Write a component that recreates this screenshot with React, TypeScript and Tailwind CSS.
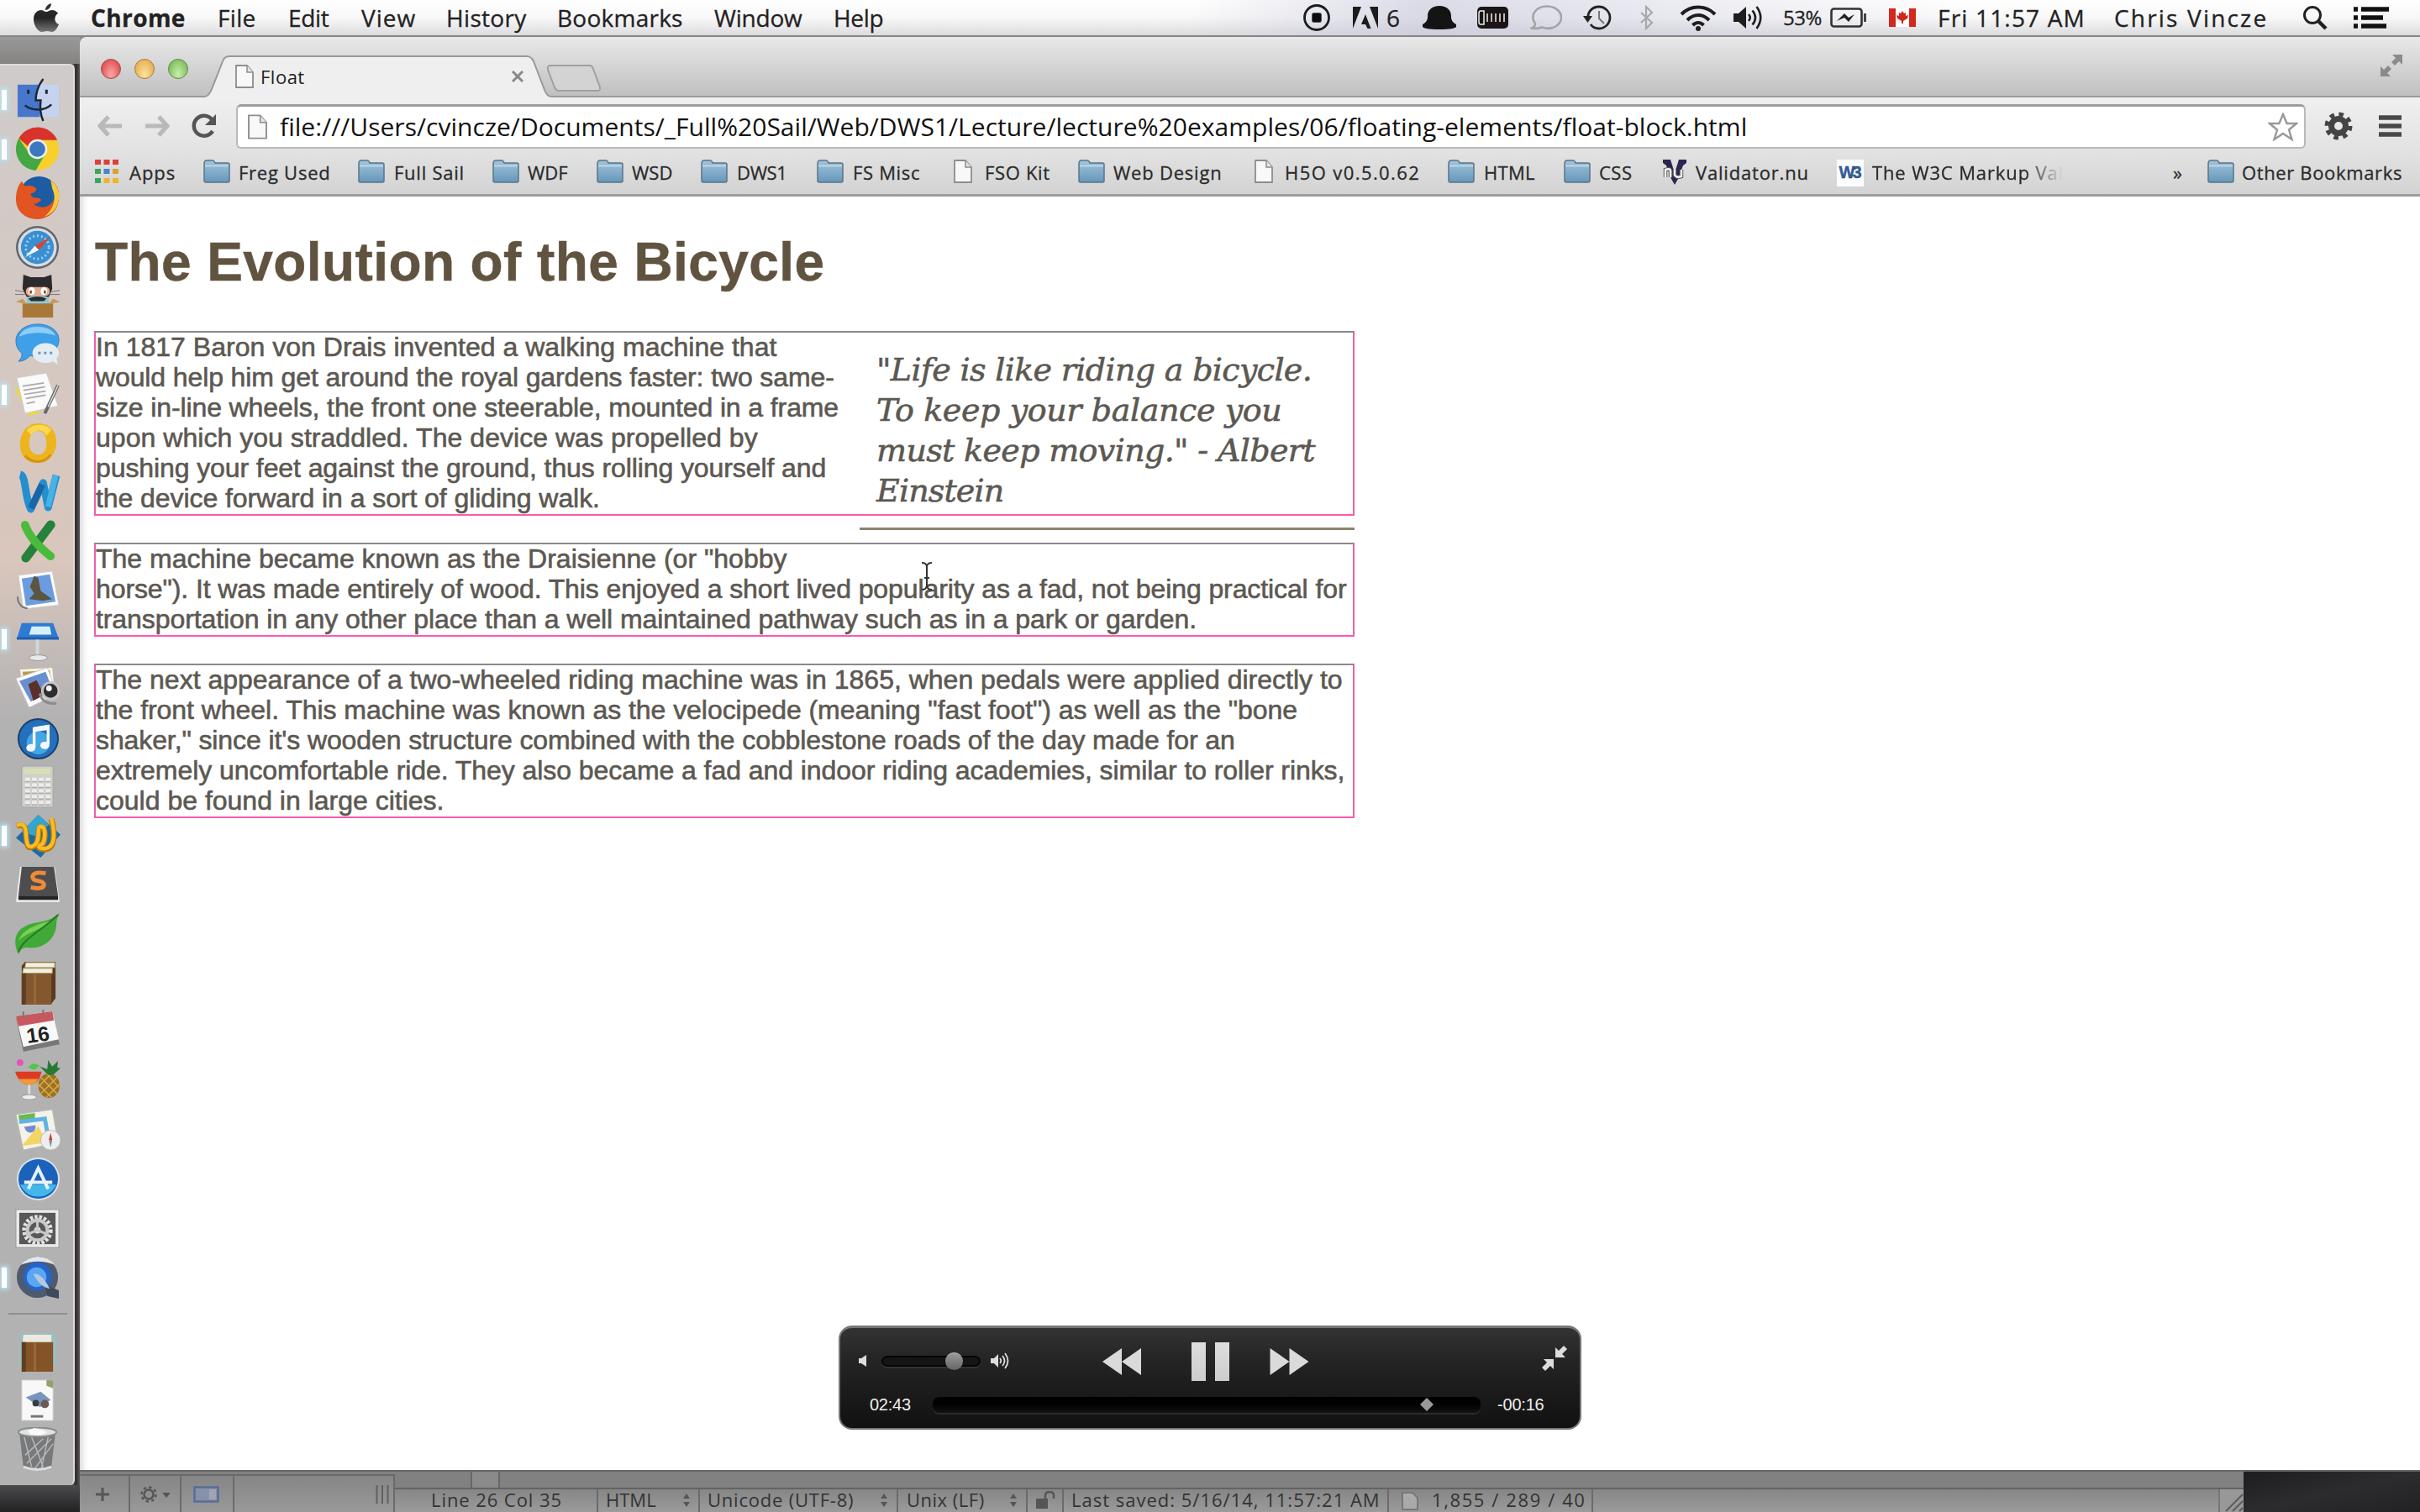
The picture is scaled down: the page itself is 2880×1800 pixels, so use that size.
import React, { useLayoutEffect, useRef, useState } from "react";

type FitProps = { children: string; className: string };

/** A single line of text tracked out or in so that it fills its box. */
function Fit({ children, className }: FitProps) {
  const box = useRef<HTMLSpanElement>(null);
  const text = useRef<HTMLSpanElement>(null);
  const [spacing, setSpacing] = useState(0);
  useLayoutEffect(() => {
    if (!box.current || !text.current) return;
    const room = box.current.clientWidth - text.current.offsetWidth;
    setSpacing(room / Math.max(1, children.length - 1));
  }, [children]);
  return (
    <span ref={box} className={"block shrink-0 whitespace-pre " + className}>
      <span ref={text} style={{ letterSpacing: `${spacing}px` }}>
        {children}
      </span>
    </span>
  );
}

/* ---------- menu bar ---------- */

function MenuBar() {
  return (
    <header className="flex h-[44px] shrink-0 items-center border-b-2 border-[#858585] bg-linear-to-b from-white via-[#f8f8f8] to-[#dcdcdf] text-[28px] leading-[42px] font-medium text-[#222] [-webkit-text-stroke:0.3px_#222]">
      <svg className="ml-[39px] h-[36px] w-[32px] shrink-0" viewBox="0 0 32 36">
        <defs>
          <linearGradient id="apple" x1="0" y1="0" x2="0" y2="1">
            <stop offset="0" stopColor="#333" />
            <stop offset=".5" stopColor="#222" />
            <stop offset="1" stopColor="#777" />
          </linearGradient>
        </defs>
        <path
          fill="url(#apple)"
          d="M22 1c0 4-3 8-7 8 0-4 3-7 7-8zM16 11c2 0 4-2 7-2 3 0 6 2 7 4-5 3-5 11 1 13-2 5-5 9-8 9-2 0-4-1-6-1s-4 1-6 1C6 35 1 27 1 20 1 13 5 9 10 9c2 0 4 2 6 2z"
        />
      </svg>
      <Fit className="ml-[37px] w-[112px] font-bold">Chrome</Fit>
      <Fit className="ml-[39px] w-[45px]">File</Fit>
      <Fit className="ml-[39px] w-[49px]">Edit</Fit>
      <Fit className="ml-[38px] w-[64px]">View</Fit>
      <Fit className="ml-[37px] w-[95px]">History</Fit>
      <Fit className="ml-[37px] w-[149px]">Bookmarks</Fit>
      <Fit className="ml-[38px] w-[105px]">Window</Fit>
      <Fit className="ml-[37px] w-[60px]">Help</Fit>
      <div className="flex h-full min-w-0 flex-1 items-center bg-linear-to-r from-transparent from-20% via-[#c4c4da]/60 via-35% to-transparent to-70%">
        <svg className="ml-[498px] h-[32px] w-[34px] shrink-0" viewBox="0 0 34 32">
          <ellipse cx="17" cy="16" rx="14.500" ry="14.500" fill="none" stroke="#1c1c1c" strokeWidth="2.800" />
          <rect x="11.500" y="10.500" width="11" height="11" rx="2" fill="#0c0c0c" stroke="#555" strokeWidth="1" />
        </svg>
        <svg className="ml-[26px] h-[26px] w-[30px] shrink-0" viewBox="0 0 30 26">
          <path fill="#1c1c1c" d="M0 0h10L0 26zM20 0h10v26zM15 9l6.500 17h-4l-2.500-5h-5z" />
        </svg>
        <Fit className="ml-[10px] w-[15px]">6</Fit>
        <svg className="ml-[28px] h-[28px] w-[40px] shrink-0" viewBox="0 0 40 28">
          <path fill="#141414" d="M20 0c9 0 14 5 14 12 0 5 1 7 6 10v3c-2 2-7 3-20 3S2 27 0 25v-3c5-3 6-5 6-10C6 5 11 0 20 0z" />
        </svg>
        <svg className="ml-[25px] h-[26px] w-[37px] shrink-0" viewBox="0 0 37 26">
          <rect width="37" height="26" rx="5" fill="#1b1516" />
          <path stroke="#ccc" strokeWidth="1.800" d="M12 8v10M17 8v10M22 8v10M27 8v10M32 8v10" />
          <path fill="none" stroke="#eee" strokeWidth="1.500" d="M8 5H4q-2 0-2 3v10q0 3 2 3h4z" />
        </svg>
        <svg className="ml-[26px] h-[30px] w-[38px] shrink-0" viewBox="0 0 38 30">
          <path fill="none" stroke="#a5a3a8" strokeWidth="2.600" d="M6 22C-1 12 7 1.500 20 1.500c12 0 20 9 16 18-4 8-14 10-22 7-4 1.500-8 2-12 1 3-1 4-3 4-5.500z" />
        </svg>
        <svg className="ml-[25px] h-[30px] w-[34px] shrink-0" viewBox="0 0 34 30">
          <path fill="none" stroke="#222" strokeWidth="2.800" d="M6 16C5 8 11 2 19 2c7 0 13 6 13 13s-6 13-13 13c-4 0-8-2-10-5" />
          <path fill="#222" d="M0 13h11l-5.500 8z" />
          <path fill="none" stroke="#777" strokeWidth="2" d="M19 7v9l6 6" />
        </svg>
        <svg className="ml-[33px] h-[30px] w-[18px] shrink-0" viewBox="0 0 18 30">
          <path fill="none" stroke="#a9a7a8" strokeWidth="2.200" d="M2 9l13 12-7 7V2l7 7L2 21" />
        </svg>
        <svg className="ml-[30px] h-[31px] w-[44px] shrink-0" viewBox="0 0 44 31">
          <g fill="none" stroke="#1e1e1e" strokeWidth="4">
            <path d="M2 11C13-.5 31-.5 42 11" />
            <path d="M9 18c8-8 18-8 26 0" />
            <path d="M15.500 24c4-4 9-4 13 0" />
          </g>
          <circle cx="22" cy="28" r="3" fill="#1e1e1e" />
        </svg>
        <svg className="ml-[19px] h-[30px] w-[36px] shrink-0" viewBox="0 0 36 30">
          <path fill="#1e1e1e" d="M1 10h6l9-8v26l-9-8H1z" />
          <path fill="none" stroke="#1e1e1e" strokeWidth="2.600" d="M19 11q3.500 4 0 8M23.500 6.500q7 8.500 0 17M28.500 2q9.500 13 0 26" />
        </svg>
        <Fit className="ml-[24px] w-[46px] text-[24px]">53%</Fit>
        <svg className="ml-[10px] h-[24px] w-[44px] shrink-0" viewBox="0 0 44 24">
          <rect x="1.500" y="1.500" width="36" height="21" rx="3" fill="none" stroke="#333" strokeWidth="2.600" />
          <path d="M41.500 7v10" stroke="#444" strokeWidth="3" />
          <path d="M8 16l9-9 5 5 7-4-7 9-5-5z" fill="#222" />
        </svg>
        <svg className="ml-[26px] h-[22px] w-[32px] shrink-0" viewBox="0 0 32 22">
          <rect width="32" height="22" fill="#fff" />
          <path fill="#d2281e" d="M0 0h8v22H0zM24 0h8v22h-8zM16 3l2 3 2-1v4l3-1-1 4-5 3v3h-2v-3l-5-3-1-4 3 1V5l2 1z" />
        </svg>
        <Fit className="ml-[26px] w-[175px]">Fri 11:57 AM</Fit>
        <Fit className="ml-[35px] w-[181px]">Chris Vincze</Fit>
        <svg className="ml-[43px] h-[30px] w-[30px] shrink-0" viewBox="0 0 30 30">
          <circle cx="12" cy="12" r="9.500" fill="none" stroke="#222" strokeWidth="3" />
          <path d="M19 19l9 9" stroke="#222" strokeWidth="4.500" />
        </svg>
        <svg className="ml-[31px] h-[26px] w-[42px] shrink-0" viewBox="0 0 42 26">
          <path stroke="#111" strokeWidth="5.500" d="M0 3h5M0 13h5M0 23h5M9 3h33M9 13h26M9 23h30" />
        </svg>
      </div>
    </header>
  );
}

/* ---------- dock ---------- */

const dockIcons: { running?: boolean; art: React.ReactNode }[] = [
  {
    running: true,
    art: (
      <>
        <rect x="3" y="8" width="50" height="39" fill="#c6d3ee" />
        <path d="M3 8h26l-4 20h6l-1 19H3z" fill="#4677cc" />
        <path d="M34 1c-6 8-9 17-9 26h6c-1 8 0 18 3 25" fill="none" stroke="#1e2737" strokeWidth="2.500" />
        <path d="M12 33c8 7 24 7 32-1" fill="none" stroke="#1e2737" strokeWidth="2.500" />
        <path d="M16 14v5M38 14v5" stroke="#1e2737" strokeWidth="3" />
      </>
    ),
  },
  {
    running: true,
    art: (
      <>
        <circle cx="27" cy="27" r="26" fill="#f9cf2c" />
        <path d="M4.500 14A26 26 0 0 1 51 16H27a12 12 0 0 0-11 8z" fill="#d8322b" />
        <path d="M4.500 14A26 26 0 0 0 25 53l11-19a12 12 0 0 1-19-2z" fill="#43a745" />
        <circle cx="27" cy="27" r="12" fill="#eee" />
        <circle cx="27" cy="27" r="9.500" fill="#3c78c0" />
      </>
    ),
  },
  {
    art: (
      <>
        <circle cx="29" cy="25" r="24" fill="#1d5ba2" />
        <path d="M43 5c8 6 11 13 10 23-1 15-12 24-25 25C12 53 1 43 1 29 1 20 3 13 8 7l4 6c5-2 10-1 14 3-1 4-4 5-7 6 0 4 3 5 7 5 3 0 5 1 6 3-3 1-5 5-10 4 8 8 23 5 26-8 2-9-1-15-5-21z" fill="#e25421" />
        <path d="M43 5c11 9 13 21 7 33-4 7-9 10-15 12 11-8 16-22 10-34z" fill="#f5ca3e" />
      </>
    ),
  },
  {
    art: (
      <>
        <circle cx="27" cy="27" r="26" fill="#62666d" />
        <circle cx="27" cy="27" r="23.500" fill="#d8dde2" />
        <circle cx="27" cy="27" r="20" fill="#398fd2" />
        <circle cx="27" cy="27" r="14" fill="none" stroke="#9fd2f0" strokeDasharray="2 3" strokeWidth="3" />
        <path d="M12 39l12-14 5 5z" fill="#f3f5f7" />
        <path d="M43 14L24 25l5 5z" fill="#d6452f" />
      </>
    ),
  },
  {
    art: (
      <>
        <path d="M0 20l12 2M54 20l-12 2M0 25h12M54 25H42" stroke="#777" />
        <path d="M10 1l9 3h16l9-3 1 17-4 10H14L9 18z" fill="#2d2a2e" />
        <rect x="13" y="16" width="29" height="11" rx="5" fill="#e3aa8c" />
        <ellipse cx="20" cy="21" rx="4" ry="5" fill="#fff" />
        <ellipse cx="35" cy="21" rx="4" ry="5" fill="#fff" />
        <path d="M19 20v4M36 20v4" stroke="#7a4a38" strokeWidth="2.500" />
        <path d="M14 29q13-6 27 0v8H14z" fill="#8fc8d3" />
        <path d="M16 30q11-5 22 0l-3 3H19z" fill="#2d2a2e" />
        <path d="M9 36h37v17H9z" fill="#a87839" />
        <path d="M9 36l-8-2 8-4 5 6zM46 36l8-2-8-4-5 6z" fill="#c69a59" />
      </>
    ),
  },
  {
    art: (
      <>
        <path d="M27 1c15 0 26 8 26 19S43 40 28 40c-4 0-7 0-10-1-4 5-9 7-14 7 3-3 5-6 4-10C3 32 1 27 1 21 1 10 12 1 27 1z" fill="#3f9fe8" stroke="#2d7dc4" />
        <path d="M27 4c12 0 20 5 22 11-11-5-32-5-44 1C7 9 15 4 27 4z" fill="#8fcdf7" />
        <ellipse cx="37" cy="36" rx="16" ry="12" fill="#e3edf4" />
        <path d="M43 44l9 6-3-11z" fill="#e3edf4" />
        <path d="M28 36h3M35 36h3M42 36h3" stroke="#7796b0" strokeWidth="3" />
      </>
    ),
  },
  {
    running: true,
    art: (
      <>
        <path d="M0 20l10-4 20 34-14 3z" fill="#ead845" />
        <path d="M2 7l36-6 14 40-40 9z" fill="#fafafa" stroke="#ccc" />
        <path d="M9 17l26-4M10 22l26-4M11 27l26-4M13 32l24-4M14 38l10-2" stroke="#aaa" strokeWidth="1.800" />
        <path d="M52 16L36 50" stroke="#66696d" strokeWidth="4" />
        <path d="M52 16L40 42" stroke="#ddd" strokeWidth="1.500" />
      </>
    ),
  },
  {
    art: (
      <>
        <path fillRule="evenodd" d="M28 3c14 0 22 9 22 23S41 51 27 51 6 42 6 28 15 3 28 3zm-1 9c-7 0-10 7-10 15s4 14 11 14 10-6 10-14-3-15-11-15z" fill="#eeb41e" />
        <path d="M14 12c6-9 23-10 30-1l-6 7c-5-9-14-8-18-1z" fill="#fbd84c" />
        <path d="M12 42c8 10 24 10 31-1" fill="none" stroke="#d69312" strokeWidth="3" />
      </>
    ),
  },
  {
    art: (
      <>
        <path d="M6 5c8 2 5 27 13 42L34 15l6 30L50 6" fill="none" stroke="#238fcf" strokeWidth="9" strokeLinejoin="round" />
        <path d="M19 46L33 17" stroke="#1a65a8" strokeWidth="8" />
        <path d="M40 44L49 6" stroke="#46b2e5" strokeWidth="7" />
      </>
    ),
  },
  {
    art: (
      <>
        <path d="M43 7L13 47" stroke="#24823a" strokeWidth="11" strokeLinecap="round" />
        <path d="M12 7q6 18 31 38" fill="none" stroke="#4abb3c" strokeWidth="10" strokeLinecap="round" />
      </>
    ),
  },
  {
    art: (
      <>
        <path d="M4 8l41-5 8 41-43 5z" fill="#fdfdfd" stroke="#ccc" />
        <path d="M8 12l34-5 7 33-36 5z" fill="#6c9ce0" />
        <path d="M23 9l5 2 3 16 14 10-12 2-16-2 6-7-5-8z" fill="#5c5640" />
        <path d="M3 34c0 10 7 14 12 14" fill="none" stroke="#777" strokeWidth="2" />
      </>
    ),
  },
  {
    running: true,
    art: (
      <>
        <path d="M8 7h38l7 19H2z" fill="#2e7bd4" />
        <path d="M2 24h51v3H2z" fill="#1f5eb0" />
        <path d="M20 11h22l2 10H17z" fill="#d7f0f8" />
        <path d="M27 27v21" stroke="#cfd7de" strokeWidth="4" />
        <ellipse cx="28" cy="49" rx="11" ry="3.500" fill="#e5e9ee" stroke="#999" />
      </>
    ),
  },
  {
    art: (
      <>
        <path d="M6 4l39-2 3 30-38 4z" fill="#f8f4e3" />
        <path d="M9 7l33-2 2 20-31 5z" fill="#b69a56" />
        <path d="M1 15l38-13 12 32-34 16z" fill="#fff" stroke="#ccc" />
        <path d="M5 18l32-11 9 23-27 13z" fill="#6a8fd0" />
        <path d="M16 22l10-5 9 18-13 7z" fill="#5b302b" />
        <circle cx="43" cy="30" r="10" fill="#2e2e30" stroke="#c5c5c7" strokeWidth="3" />
        <circle cx="41" cy="27" r="3.500" fill="#f4f4f4" />
        <path d="M30 33q3 14 20 12" fill="none" stroke="#8d8d8d" strokeWidth="3" />
      </>
    ),
  },
  {
    art: (
      <>
        <circle cx="28" cy="28" r="25" fill="#1d3f68" />
        <circle cx="28" cy="28" r="23" fill="#2370bd" />
        <circle cx="28" cy="33" r="14" fill="#45a6e4" />
        <path d="M23 38V16l17-3v22" fill="none" stroke="#f5f7fa" strokeWidth="3.500" />
        <path d="M22 17l19-3" stroke="#f5f7fa" strokeWidth="6" />
        <ellipse cx="19" cy="39" rx="5.500" ry="4.500" fill="#f5f7fa" />
        <ellipse cx="36" cy="36" rx="5.500" ry="4.500" fill="#f5f7fa" />
      </>
    ),
  },
  {
    art: (
      <>
        <rect x="8" y="2" width="38" height="50" rx="2" fill="#cfcfcb" stroke="#a3a3a0" />
        <rect x="11" y="5" width="32" height="7" fill="#d8dfb4" />
        <path d="M12 18h31M12 25h31M12 32h31M12 39h31M12 46h31" stroke="#ececec" strokeWidth="4" strokeDasharray="6 2.300" />
        <path d="M12 21h31M12 28h31M12 35h31M12 42h31M12 49h31" stroke="#a5a5a2" strokeWidth="1" strokeDasharray="6 2.300" />
      </>
    ),
  },
  {
    running: true,
    art: (
      <>
        <path d="M28 1l27 24-24 28L1 29z" fill="#1b6aa3" />
        <path d="M28 1l13 12-15 14L7 22z" fill="#33a6cf" />
        <path d="M2 15q10-5 11 8c1 18 3 20 10 16 9-6 2-22 8-23 8 0 5 20 1 22-5 2-4 5 4 5 12-1 13-16 8-37" fill="none" stroke="#b87a0b" strokeWidth="7" />
        <path d="M2 14q10-5 11 8c1 18 3 20 10 16 9-6 2-22 8-23 8 0 5 20 1 22-5 2-4 5 4 5 12-1 13-16 8-37" fill="none" stroke="#fbbb26" strokeWidth="4.500" />
      </>
    ),
  },
  {
    art: (
      <>
        <path d="M6 5h42l6 43H1z" fill="#e9e9e9" />
        <path d="M8 5h39l5 35H4z" fill="#4d4d4f" />
        <path d="M4 40h48v5H4z" fill="#242424" />
        <path d="M37 13q-15-3-16 4 0 4 7 5 7 1 7 5-1 6-16 3" fill="none" stroke="#ef8a3a" strokeWidth="5" />
      </>
    ),
  },
  {
    art: (
      <>
        <path d="M54 1C52 7 50 10 50 16c-1 18-16 30-34 28-5-1-10 2-12 8C-2 40-2 25 12 18 25 11 42 15 54 1z" fill="#41a938" />
        <path d="M52 4c-5 8-14 8-24 12C14 21 6 28 4 36 14 24 34 24 52 4z" fill="#78d052" />
        <path d="M4 50C8 34 29 26 52 4" fill="none" stroke="#257a23" strokeWidth="2" />
      </>
    ),
  },
  {
    art: (
      <>
        <path d="M12 1h37v44l-5 7H8V6z" fill="#5b3a1f" />
        <path d="M13 2h35v6H12zM10 9h35v6H9z" fill="#f1eee2" stroke="#b8aa68" />
        <path d="M8 15h36v38H8z" fill="#84582e" />
        <path d="M8 15h5v38H8z" fill="#5f3d20" />
        <path d="M24 16v36" stroke="#99693a" strokeWidth="3" />
      </>
    ),
  },
  {
    art: (
      <>
        <path d="M1 10l44-6 9 38-44 9z" fill="#777" />
        <path d="M1 8l44-6 8 34-43 9z" fill="#f8f8f8" />
        <path d="M1 8l44-6 2 11L4 20z" fill="#c85860" />
        <path d="M10 2v8M34 0v7" stroke="#777" strokeWidth="2" />
        <text x="14" y="39" transform="rotate(-8 28 32)" fontFamily="Liberation Sans" fontWeight="bold" fontSize="25" fill="#222">
          16
        </text>
      </>
    ),
  },
  {
    art: (
      <>
        <path d="M0 15h32q-3 16-15 16T0 15z" fill="#dc3b23" />
        <path d="M4 24h24q-4 8-11 7-8 0-13-7z" fill="#f09a36" />
        <path d="M17 31v13" stroke="#ddd" strokeWidth="3" />
        <ellipse cx="17" cy="46" rx="9" ry="3" fill="#eee" stroke="#999" />
        <circle cx="6" cy="4" r="4" fill="#e356b4" />
        <path d="M16 10q6-8 14-2l-7 5z" fill="#53c744" />
        <ellipse cx="41" cy="32" rx="13" ry="15" fill="#9b7225" />
        <path d="M31 22l20 20M28 30l16 16M38 17l15 17M51 22L31 42M54 30L38 46M44 17L28 34" stroke="#d9ac48" strokeWidth="1.500" />
        <path d="M40 19L30 9l9 3 1-11 5 8 7-7-1 8 4 1-9 8z" fill="#277a33" />
      </>
    ),
  },
  {
    art: (
      <>
        <path d="M1 8l44-6 7 40-42 9z" fill="#f5f3e8" stroke="#bbb" />
        <path d="M4 9l20-3v7L5 15z" fill="#6cb856" />
        <path d="M5 17l31-4 4 22" fill="none" stroke="#5fb3e3" strokeWidth="5" />
        <path d="M8 46l20-24 10 20z" fill="#f2d663" />
        <path d="M11 23l14-2q0 8-6 9-6 0-8-7z" fill="#7389d4" />
        <circle cx="43" cy="39" r="12" fill="#eee" stroke="#bbb" />
        <path d="M41 39l2-9 2 9z" fill="#ca3327" />
        <path d="M41 39l2 9 2-9z" fill="#888" />
      </>
    ),
  },
  {
    art: (
      <>
        <circle cx="28" cy="27" r="26" fill="#dce2e8" />
        <circle cx="28" cy="27" r="24" fill="#1b62ba" />
        <path d="M6 34a24 24 0 0 0 44 0z" fill="#44b7ea" />
        <path d="M16 39l12-25 12 25M11 31h34" fill="none" stroke="#e7f2fb" strokeWidth="4" />
      </>
    ),
  },
  {
    art: (
      <>
        <rect x="1" y="4" width="52" height="46" fill="#ececec" stroke="#999" />
        <rect x="5" y="8" width="44" height="38" fill="#58585a" />
        <circle cx="27" cy="29" r="16" fill="none" stroke="#e3e3e3" strokeWidth="5" strokeDasharray="3.500 2" />
        <circle cx="27" cy="29" r="12" fill="none" stroke="#c8c8c8" strokeWidth="4" />
        <circle cx="27" cy="29" r="4" fill="#ddd" />
        <path d="M27 29V14M27 29l14 6M27 29l-14 6" stroke="#c8c8c8" strokeWidth="3" />
      </>
    ),
  },
  {
    running: true,
    art: (
      <>
        <circle cx="27" cy="27" r="25" fill="#4d5a70" />
        <path d="M7 12A26 26 0 0 1 48 12q-20-8-41 0z" fill="#e3e7ed" />
        <path d="M36 36l17 7v10l-14-3z" fill="#3e4a5e" />
        <circle cx="27" cy="26" r="17" fill="#2465cb" />
        <circle cx="26" cy="27" r="12" fill="#5ba6f3" />
        <path d="M22 23q10-2 20 18-12-2-20-18z" fill="#b7c8dc" />
      </>
    ),
  },
];

const dockStacks: React.ReactNode[] = [
  <>
    <path d="M6 6q4-4 12-2h32v40H4z" fill="#9dbdbf" />
    <path d="M10 6h34v10H9z" fill="#eceade" />
    <path d="M8 15h38v36H8z" fill="#845428" />
    <path d="M8 15h5v36H8z" fill="#5f3d20" />
    <path d="M24 16v34" stroke="#99693a" strokeWidth="3" />
  </>,
  <>
    <path d="M8 2h31l7 7v42H8z" fill="#f8f8f8" stroke="#ccc" />
    <path d="M38 2l8 1v9l-8-3z" fill="#92a36a" />
    <path d="M13 23l18-7 12 10-13 9z" fill="#7895bc" />
    <circle cx="25" cy="30" r="4" fill="#3b3b3d" />
    <circle cx="36" cy="31" r="5" fill="#6d5a50" />
    <path d="M19 46h15" stroke="#777" strokeWidth="3" />
  </>,
  <>
    <path d="M5 5h44l-5 43q-17 7-34 0z" fill="#77797b" />
    <path d="M11 12l9 36M20 12l14 36M44 14L14 44M34 14L12 34M46 20L24 50M40 12l-8 38" stroke="#b7b9bb" strokeWidth="1.500" />
    <ellipse cx="27" cy="6" rx="23" ry="5.500" fill="#e0e1e2" stroke="#8a8b8c" strokeWidth="2" />
    <path d="M15 5l8-4 8 2 8 3-8 4-12-1z" fill="#fafafa" />
    <path d="M10 48q17 7 34 0" fill="none" stroke="#ddd" strokeWidth="3" />
  </>,
];

function Dock() {
  return (
    <aside className="flex w-[95px] shrink-0 flex-col bg-linear-to-r from-[#8f8b8a] from-88% via-[#2e2b2c] via-95% to-[#5c5a5a]">
      <div className="h-[32px] shrink-0 bg-linear-to-b from-[#999] to-[#868282]" />
      <div className="flex h-[1692px] w-[89px] shrink-0 flex-col rounded-r-md border-t-2 border-r-2 border-[#dedad8] bg-linear-to-b from-[#cfcbca] via-[#d9c6bc] via-35% to-[#b3b2b3] to-46% pt-[12px]">
        {dockIcons.map((icon, i) => (
          <div key={i} className="flex h-[58.400px] shrink-0 items-center">
            <div className={icon.running ? "h-[24px] w-[6px] translate-x-[2px] bg-white shadow-[0_0_5px_2px_#b8e4f8]" : "h-[24px] w-[6px]"} />
            <svg className="ml-[12px] h-[53px] w-[54px]" viewBox="0 0 55 54">
              {icon.art}
            </svg>
          </div>
        ))}
        <div className="mt-[13px] ml-[10px] h-[2px] w-[70px] shrink-0 bg-[#8f8e90]" />
        <div className="mt-[18px] flex flex-col gap-[5px]">
          {dockStacks.map((art, i) => (
            <svg key={i} className="ml-[18px] h-[53px] w-[54px]" viewBox="0 0 55 54">
              {art}
            </svg>
          ))}
        </div>
      </div>
      <div className="flex-1 bg-linear-to-b from-[#4b4b4e] to-[#222]" />
    </aside>
  );
}

/* ---------- browser chrome ---------- */

function PageIcon({ className }: { className: string }) {
  return (
    <svg className={"shrink-0 " + className} viewBox="0 0 22 28">
      <path d="M1 1h13l7 8v18H1z" fill="#f8f8f8" stroke="#8d8d8d" strokeWidth="1.800" />
      <path d="M14 1v8h7" fill="#e5e5e5" stroke="#8d8d8d" strokeWidth="1.500" />
    </svg>
  );
}

function Folder({ className }: { className: string }) {
  return (
    <svg className={"h-[28px] w-[32px] shrink-0 " + className} viewBox="0 0 32 28">
      <defs>
        <linearGradient id="folder" x1="0" y1="0" x2="0" y2="1">
          <stop offset="0" stopColor="#a3c4da" />
          <stop offset="1" stopColor="#6597bb" />
        </linearGradient>
      </defs>
      <path d="M1 5q0-4 3-4h7q2 0 3 3h15q2 0 2 2v19q0 2-2 2H3q-2 0-2-2z" fill="url(#folder)" stroke="#587487" strokeWidth="1.500" />
      <path d="M2 7.500h28" stroke="#c5dfef" strokeWidth="1.500" />
    </svg>
  );
}

function TabStrip() {
  return (
    <div className="flex h-[72px] shrink-0 items-end bg-linear-to-b from-[#e9e9e9] to-[#bfbfbf] shadow-[inset_0_-2px_0_#9b9b9b]">
      <div className="ml-[25px] mb-[22px] flex gap-[16px]">
        <div className="size-[24px] rounded-full border border-[#a04846] bg-radial-[at_50%_80%] from-[#f9aaa4] to-[#d9373b]" />
        <div className="size-[24px] rounded-full border border-[#a87a38] bg-radial-[at_50%_80%] from-[#fbe3a0] to-[#e2a03d]" />
        <div className="size-[24px] rounded-full border border-[#5a8b46] bg-radial-[at_50%_80%] from-[#c9efa8] to-[#69b04c]" />
      </div>
      <div className="relative ml-[20px] flex h-[50px] w-[414px] items-center">
        <svg className="absolute inset-0 h-[50px] w-[414px]" viewBox="0 0 414 50">
          <path d="M0 49q5-1 8-9l13-33q2-6 8-6h354q5 0 8 6l13 34q3 8 8 8v2H0z" fill="#efefef" />
          <path d="M0 49q5-1 8-9l13-33q2-6 8-6h354q5 0 8 6l13 34q3 8 8 8" fill="none" stroke="#999" strokeWidth="2" />
        </svg>
        <PageIcon className="relative ml-[36px] h-[28px] w-[22px]" />
        <Fit className="relative ml-[8px] w-[52px] text-[22px] leading-[26px] font-medium text-[#222]">Float</Fit>
        <svg className="relative ml-[247px] h-[14px] w-[14px] shrink-0" viewBox="0 0 14 14">
          <path d="M1 1l12 12M13 1L1 13" stroke="#888" strokeWidth="3" />
        </svg>
      </div>
      <svg className="-ml-[8px] mb-[7px] h-[32px] w-[66px] shrink-0" viewBox="0 0 66 32">
        <path d="M5 1h46q4 0 5 4l8 22q1 4-3 4H15q-3 0-5-4L2 6q-1-5 3-5z" fill="#d3d3d3" stroke="#a0a0a0" strokeWidth="2" />
      </svg>
      <svg className="mr-[20px] mb-[24px] ml-auto h-[28px] w-[28px]" viewBox="0 0 28 28">
        <path d="M15 1h12v12l-4-4-5 5-4-4 5-5zM1 27V15l4 4 5-5 4 4-5 5 4 4z" fill="#8b8b8b" />
      </svg>
    </div>
  );
}

function Toolbar() {
  return (
    <div className="flex h-[68px] shrink-0 items-center bg-linear-to-b from-[#f0f0f0] to-[#e1e1e1]">
      <svg className="ml-[21px] h-[26px] w-[30px] shrink-0" viewBox="0 0 30 26">
        <path d="M13 2L3 13l10 11M3 13h26" fill="none" stroke="#b9b9b9" strokeWidth="5" />
      </svg>
      <svg className="ml-[26px] h-[26px] w-[30px] shrink-0" viewBox="0 0 30 26">
        <path d="M17 2l10 11-10 11M27 13H1" fill="none" stroke="#b9b9b9" strokeWidth="5" />
      </svg>
      <svg className="ml-[25px] h-[32px] w-[32px] shrink-0" viewBox="0 0 32 32">
        <path d="M25 8A12 12 0 1 0 26 22" fill="none" stroke="#555" strokeWidth="4.500" />
        <path d="M30 2v13H17z" fill="#555" />
      </svg>
      <div className="ml-[22px] flex h-[53px] w-[2463px] shrink-0 items-center rounded-md border-2 border-t-[3px] border-[#b9b9b9] border-t-[#9d9d9d] bg-white">
        <PageIcon className="ml-[12px] h-[30px] w-[23px]" />
        <Fit className="ml-[15px] w-[1746px] text-[30px] leading-[46px] text-[#111]">
          file:///Users/cvincze/Documents/_Full%20Sail/Web/DWS1/Lecture/lecture%20examples/06/floating-elements/float-block.html
        </Fit>
        <svg className="mr-[7px] ml-auto h-[34px] w-[36px]" viewBox="0 0 36 34">
          <path d="M18 2l4.600 11H34l-9 7.500L28.500 32 18 25 7.500 32 11 20.500 2 13h11.400z" fill="#fff" stroke="#999" strokeWidth="2.400" />
        </svg>
      </div>
      <svg className="ml-[22px] h-[34px] w-[34px] shrink-0" viewBox="0 0 34 34">
        <circle cx="17" cy="17" r="8.500" fill="none" stroke="#444" strokeWidth="7" />
        <circle cx="17" cy="17" r="14" fill="none" stroke="#444" strokeWidth="5" strokeDasharray="5.500 5.496" />
      </svg>
      <svg className="ml-[31px] h-[26px] w-[27px] shrink-0" viewBox="0 0 27 26">
        <path d="M0 3h27M0 13h27M0 23h27" stroke="#494949" strokeWidth="5.500" />
      </svg>
    </div>
  );
}

function BookmarksBar() {
  return (
    <div className="flex h-[50px] shrink-0 items-start border-b-[3px] border-[#9c9c9c] bg-linear-to-b from-[#e1e1e1] to-[#d3d3d3] pt-[6px] text-[22px] leading-[30px] font-medium text-[#2a2a2a] [-webkit-text-stroke:0.3px_#2a2a2a]">
      <svg className="ml-[18px] h-[28px] w-[28px] shrink-0" viewBox="0 0 28 28">
        <path d="M0 3h28" stroke="#dc3f3a" strokeWidth="6" strokeDasharray="7 3.500" />
        <path d="M0 14h7" stroke="#3ca55a" strokeWidth="6" />
        <path d="M10.500 14h7" stroke="#4a82d0" strokeWidth="6" />
        <path d="M21 14h7" stroke="#d9a136" strokeWidth="6" />
        <path d="M0 25h7" stroke="#3ca55a" strokeWidth="6" />
        <path d="M10.500 25h17.500" stroke="#f0b429" strokeWidth="6" strokeDasharray="7 3.500" />
      </svg>
      <Fit className="ml-[13px] w-[54px]">Apps</Fit>
      <Folder className="ml-[34px]" />
      <Fit className="ml-[10px] w-[109px]">Freg Used</Fit>
      <Folder className="ml-[33px]" />
      <Fit className="ml-[11px] w-[83px]">Full Sail</Fit>
      <Folder className="ml-[34px]" />
      <Fit className="ml-[10px] w-[48px]">WDF</Fit>
      <Folder className="ml-[34px]" />
      <Fit className="ml-[10px] w-[48px]">WSD</Fit>
      <Folder className="ml-[34px]" />
      <Fit className="ml-[11px] w-[60px]">DWS1</Fit>
      <Folder className="ml-[35px]" />
      <Fit className="ml-[11px] w-[80px]">FS Misc</Fit>
      <PageIcon className="ml-[40px] h-[28px] w-[22px]" />
      <Fit className="ml-[15px] w-[77px]">FSO Kit</Fit>
      <Folder className="ml-[34px]" />
      <Fit className="ml-[10px] w-[129px]">Web Design</Fit>
      <PageIcon className="ml-[39px] h-[28px] w-[22px]" />
      <Fit className="ml-[14px] w-[160px]">H5O v0.5.0.62</Fit>
      <Folder className="ml-[34px]" />
      <Fit className="ml-[11px] w-[61px]">HTML</Fit>
      <Folder className="ml-[34px]" />
      <Fit className="ml-[10px] w-[39px]">CSS</Fit>
      <svg className="ml-[37px] h-[30px] w-[28px] shrink-0" viewBox="0 0 28 30">
        <path d="M0 0h9l5 16L19 0h9v4l-4 3-6 16-4 7-4-7L4 7 0 4z" fill="#2b2550" />
        <path d="M3 21v-9q5-2 6 1v8M14 12v6q1 4 8 2v-8" fill="none" stroke="#555" strokeWidth="4.500" />
        <path d="M3 21v-9q5-2 6 1v8M14 12v6q1 4 8 2v-8" fill="none" stroke="#f5f5f5" strokeWidth="2.500" />
      </svg>
      <Fit className="ml-[11px] w-[134px]">Validator.nu</Fit>
      <div className="ml-[34px] flex h-[32px] w-[32px] shrink-0 justify-center bg-[#fafcff]">
        <Fit className="w-[27px] font-['Liberation_Sans',sans-serif] text-[20px] leading-[31px] font-bold text-[#2a62a8]">W3</Fit>
      </div>
      <Fit className="ml-[10px] w-[227px] mask-r-from-80% mask-r-to-100%">The W3C Markup Val</Fit>
      <Fit className="ml-[131px] w-[15px]">»</Fit>
      <Folder className="ml-[26px]" />
      <Fit className="ml-[9px] w-[190px]">Other Bookmarks</Fit>
    </div>
  );
}

/* ---------- web page ---------- */

function WebPage() {
  return (
    <main className="relative flex-1 bg-white pl-[17px] font-['Liberation_Sans',sans-serif] text-[32px] leading-[36px] text-[#5c5852] shadow-[inset_8px_0_8px_-6px_#ccccd4] [-webkit-text-stroke:0.6px_#5c5852]">
      <h1 className="pt-[42px] text-[64px] leading-[72px] font-bold text-[#60533f] [-webkit-text-stroke:0.5px_#60533f]">
        <Fit className="ml-[1px] w-[868px]">The Evolution of the Bicycle</Fit>
      </h1>
      <div className="mt-[46px] flex w-[1500px] flex-col gap-[32px]">
        <section className="flex h-[220px] border-2 border-x-[#e861ac] border-t-[#8b8988] border-b-[#ff58b0]">
          <div className="-mt-[1px]">
            <Fit className="w-[810px]">In 1817 Baron von Drais invented a walking machine that</Fit>
            <Fit className="w-[879px]">would help him get around the royal gardens faster: two same-</Fit>
            <Fit className="w-[884px]">size in-line wheels, the front one steerable, mounted in a frame</Fit>
            <Fit className="w-[788px]">upon which you straddled. The device was propelled by</Fit>
            <Fit className="w-[869px]">pushing your feet against the ground, thus rolling yourself and</Fit>
            <Fit className="w-[600px]">the device forward in a sort of gliding walk.</Fit>
          </div>
          <blockquote className="-mr-[2px] ml-auto h-[235px] w-[589px] border-b-[3px] border-[#8d8470] pt-[20px] pl-[20px] font-['DejaVu_Serif',serif] text-[38px] leading-[48px] text-[#5c5852] italic">
            <Fit className="w-[519px]">"Life is like riding a bicycle.</Fit>
            <Fit className="w-[483px]">To keep your balance you</Fit>
            <Fit className="w-[523px]">must keep moving." - Albert</Fit>
            <Fit className="w-[152px]">Einstein</Fit>
          </blockquote>
        </section>
        <section className="h-[112px] border-2 border-x-[#e861ac] border-t-[#8b8988] border-b-[#ff58b0]">
          <div className="-mt-[1px]">
            <Fit className="w-[822px]">The machine became known as the Draisienne (or "hobby</Fit>
            <Fit className="w-[1489px]">horse"). It was made entirely of wood. This enjoyed a short lived popularity as a fad, not being practical for</Fit>
            <Fit className="w-[1310px]">transportation in any other place than a well maintained pathway such as in a park or garden.</Fit>
          </div>
        </section>
        <section className="h-[184px] border-2 border-x-[#e861ac] border-t-[#8b8988] border-b-[#ff58b0]">
          <div className="-mt-[1px]">
            <Fit className="w-[1484px]">The next appearance of a two-wheeled riding machine was in 1865, when pedals were applied directly to</Fit>
            <Fit className="w-[1430px]">the front wheel. This machine was known as the velocipede (meaning "fast foot") as well as the "bone</Fit>
            <Fit className="w-[1356px]">shaker," since it's wooden structure combined with the cobblestone roads of the day made for an</Fit>
            <Fit className="w-[1486px]">extremely uncomfortable ride. They also became a fad and indoor riding academies, similar to roller rinks,</Fit>
            <Fit className="w-[414px]">could be found in large cities.</Fit>
          </div>
        </section>
      </div>
      <svg className="absolute top-[435px] left-[1001px] h-[34px] w-[14px]" viewBox="0 0 14 34">
        <path d="M1 1q5 0 6 4 1-4 6-4M7 5v24M1 33q5 0 6-4 1 4 6 4M4 19h6" fill="none" stroke="#333" strokeWidth="2" />
      </svg>
      <Player />
    </main>
  );
}

/* ---------- playback controls ---------- */

function Player() {
  return (
    <div className="absolute top-[1344px] left-[903px] flex h-[124px] w-[884px] flex-col rounded-[16px] border-2 border-t-[3px] border-[#777] bg-linear-to-b from-[#333] via-[#242424] via-33% to-[#111] text-[20px] leading-[24px] text-[#eee] [-webkit-text-stroke:0]">
      <div className="flex h-[78px] shrink-0 items-center">
        <svg className="ml-[22px] h-[14px] w-[9px]" viewBox="0 0 9 14">
          <path d="M0 4h3l6-4v14l-6-4H0z" fill="#ddd" />
        </svg>
        <div className="ml-[18px] flex h-[13px] w-[118px] items-center rounded-full border-2 border-[#050505] bg-[#151515] shadow-[0_2px_0_#333]">
          <div className="ml-[74px] size-[21px] shrink-0 rounded-full border-t border-[#bbb] bg-linear-to-b from-[#999] to-[#666]" />
        </div>
        <svg className="ml-[12px] h-[20px] w-[22px]" viewBox="0 0 22 20">
          <path d="M0 7h4l5-5v16l-5-5H0z" fill="#ddd" />
          <path d="M11 7q2.500 3 0 6M14 4q5 6 0 12M17 1q7 9 0 18" fill="none" stroke="#ddd" strokeWidth="1.800" />
        </svg>
        <svg className="mt-[2px] ml-[111px] h-[32px] w-[46px]" viewBox="0 0 46 32">
          <path d="M23 0v32L0 16zM46 0v32L23 16z" fill="#dadada" />
        </svg>
        <div className="mt-[2px] ml-[60px] flex gap-[11px]">
          <div className="h-[46px] w-[17px] bg-linear-to-b from-[#dedede] to-[#ccc]" />
          <div className="h-[46px] w-[17px] bg-linear-to-b from-[#dedede] to-[#ccc]" />
        </div>
        <svg className="mt-[2px] ml-[48px] h-[32px] w-[47px]" viewBox="0 0 46 32">
          <path d="M0 0v32l23-16zM23 0v32l23-16z" fill="#dadada" />
        </svg>
        <svg className="mr-[15px] mb-[7px] ml-auto h-[30px] w-[30px]" viewBox="0 0 30 30">
          <path d="M16 2v12h12l-4-4 6-6-4-4-6 6zM14 28V16H2l4 4-6 6 4 4 6-6z" fill="#ddd" />
        </svg>
      </div>
      <div className="mt-[1px] flex items-center font-['Liberation_Sans',sans-serif]">
        <Fit className="ml-[35px] w-[49px]">02:43</Fit>
        <div className="ml-[26px] flex h-[19px] w-[652px] items-center rounded-[8px] bg-linear-to-b from-black to-[#141414] shadow-[0_2px_0_#2b2b2b]">
          <svg className="ml-[580px] h-[16px] w-[16px]" viewBox="0 0 16 16">
            <path d="M8 0l8 8-8 8-8-8z" fill="#999" />
          </svg>
        </div>
        <Fit className="ml-[20px] w-[56px]">-00:16</Fit>
      </div>
    </div>
  );
}

/* ---------- editor status bar behind the browser ---------- */

function Stepper({ className }: { className: string }) {
  return (
    <svg className={"h-[16px] w-[8px] shrink-0 " + className} viewBox="0 0 8 16">
      <path d="M4 0l4 6H0zM4 16l4-6H0z" fill="#555" />
    </svg>
  );
}

function Divider({ className }: { className: string }) {
  return <div className={"h-full w-[2px] shrink-0 bg-[#6b6b6b] " + className} />;
}

function EditorBar() {
  return (
    <footer className="flex h-[50px] shrink-0 border-t-2 border-[#666] bg-[#818181] text-[22px] leading-[28px] font-medium text-[#333]">
      <div className="mt-[3px] flex h-[45px] w-[375px] shrink-0 items-center border-t-2 border-r-2 border-[#6a6a6a] bg-linear-to-b from-[#868686] to-[#999]">
        <svg className="ml-[18px] h-[16px] w-[18px] shrink-0" viewBox="0 0 18 16">
          <path d="M9 0v16M1 8h16" stroke="#555" strokeWidth="3" />
        </svg>
        <Divider className="ml-[22px]" />
        <svg className="ml-[12px] h-[20px] w-[36px] shrink-0" viewBox="0 0 36 20">
          <circle cx="10" cy="10" r="5.500" fill="none" stroke="#555" strokeWidth="2.500" />
          <circle cx="10" cy="10" r="8.500" fill="none" stroke="#555" strokeWidth="2.500" strokeDasharray="3.300 3.370" />
          <path d="M26 8h10l-5 6z" fill="#555" />
        </svg>
        <Divider className="ml-[11px]" />
        <svg className="ml-[14px] h-[20px] w-[31px] shrink-0" viewBox="0 0 31 20">
          <rect x="1.500" y="1.500" width="28" height="17" fill="#8792a8" stroke="#566c9b" strokeWidth="2.500" />
          <rect x="19" y="4" width="8" height="12" fill="#a0a5b0" />
        </svg>
        <Divider className="ml-[16px]" />
        <svg className="mr-[5px] ml-auto h-[22px] w-[16px]" viewBox="0 0 16 22">
          <path d="M1.500 0v22M8 0v22M14.500 0v22" stroke="#606060" strokeWidth="2" />
        </svg>
      </div>
      <div className="flex w-[2200px] flex-col">
        <div className="flex h-[19px] shrink-0">
          <div className="w-[90px]" />
          <div className="w-[35px] border-x-2 border-[#666] bg-[#8a8a8a]" />
        </div>
        <div className="flex h-[29px] items-center border-t-2 border-[#636363] bg-linear-to-b from-[#868686] to-[#9b9b9b] leading-[24px]">
          <Fit className="-mt-[3px] ml-[43px] w-[155px]">Line 26 Col 35</Fit>
          <Divider className="ml-[42px]" />
          <Fit className="-mt-[3px] ml-[9px] w-[60px]">HTML</Fit>
          <Stepper className="-mt-[2px] ml-[32px]" />
          <Divider className="ml-[10px]" />
          <Fit className="-mt-[3px] ml-[9px] w-[174px]">Unicode (UTF-8)</Fit>
          <Stepper className="-mt-[2px] ml-[32px]" />
          <Divider className="ml-[11px]" />
          <Fit className="-mt-[3px] ml-[10px] w-[92px]">Unix (LF)</Fit>
          <Stepper className="-mt-[2px] ml-[31px]" />
          <Divider className="ml-[11px]" />
          <svg className="-mt-[2px] ml-[10px] h-[22px] w-[23px] shrink-0" viewBox="0 0 23 22">
            <rect y="9" width="14" height="12" fill="#555" />
            <path d="M11 10V5q0-4 5-4 5 0 5 4v4" fill="none" stroke="#555" strokeWidth="2.500" />
          </svg>
          <Divider className="ml-[8px]" />
          <Fit className="-mt-[3px] ml-[9px] w-[367px]">Last saved: 5/16/14, 11:57:21 AM</Fit>
          <Divider className="ml-[9px]" />
          <svg className="ml-[15px] h-[22px] w-[20px] shrink-0" viewBox="0 0 20 22">
            <path d="M1 1h12l6 6v14H1z" fill="#aaa" stroke="#777" strokeWidth="2" />
          </svg>
          <Fit className="-mt-[3px] ml-[16px] w-[182px]">1,855 / 289 / 40</Fit>
          <Divider className="ml-[8px]" />
          <div className="ml-auto flex h-full w-[30px] items-end justify-end border-l-2 border-[#777] bg-[#989898]">
            <svg className="h-[22px] w-[22px]" viewBox="0 0 22 22">
              <path d="M1 21L21 1M9 21L21 9M17 21l4-4" stroke="#5c5c5c" strokeWidth="2" />
            </svg>
          </div>
        </div>
      </div>
      <div className="flex-1 bg-linear-to-br from-[#1d1d1f] via-[#2c2c2f] to-[#222225]" />
    </footer>
  );
}

export default function App() {
  return (
    <div className="flex h-[1800px] w-[2880px] flex-col overflow-hidden bg-[#8f8b8a] font-['Open_Sans',sans-serif]">
      <MenuBar />
      <div className="flex min-h-0 flex-1">
        <Dock />
        <div className="flex min-w-0 flex-1 flex-col overflow-hidden rounded-tl-lg">
          <TabStrip />
          <Toolbar />
          <BookmarksBar />
          <WebPage />
          <EditorBar />
        </div>
      </div>
    </div>
  );
}
